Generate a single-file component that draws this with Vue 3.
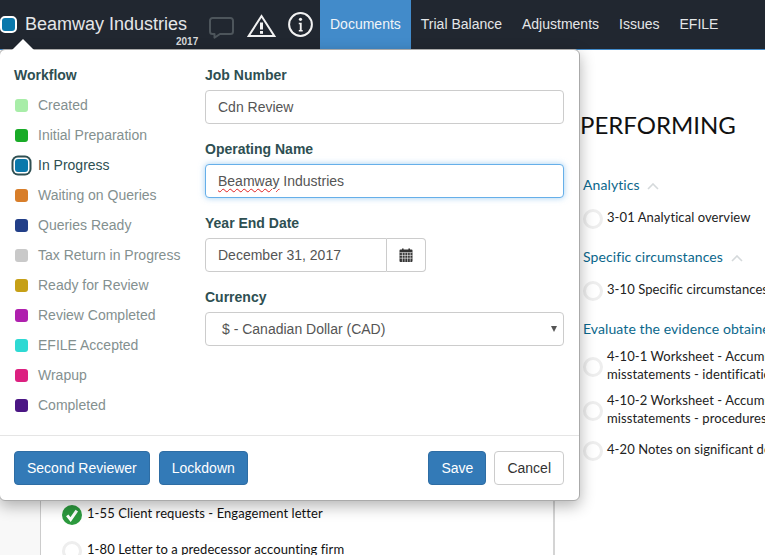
<template>
  <div class="page">
    <nav class="topbar">
      <div class="brand">
        <span class="brand-swatch"></span>
        <span class="brand-name">Beamway Industries</span>
        <span class="brand-year">2017</span>
      </div>
      <div class="nav-icons">
        <svg class="ico-comment" width="25" height="22" viewBox="0 0 25 22" fill="none">
          <path d="M3.5 1h18A2.5 2.5 0 0 1 24 3.500v11a2.500 2.500 0 0 1-2.500 2.500H11L5.500 20.800V17h-2A2.500 2.500 0 0 1 1 14.500v-11A2.500 2.500 0 0 1 3.500 1z" stroke="#4d555b" stroke-width="2" stroke-linejoin="round" />
        </svg>
        <svg class="ico-warn" width="29" height="23" viewBox="0 0 29 23" fill="none">
          <path d="M14.500 2 27.300 22H1.700z" stroke="#f2f2f2" stroke-width="2" stroke-linejoin="miter" />
          <rect x="13" y="8.500" width="3" height="7" fill="#f2f2f2" />
          <rect x="13" y="17" width="3" height="2.800" fill="#f2f2f2" />
        </svg>
        <svg class="ico-info" width="25" height="25" viewBox="0 0 25 25" fill="none">
          <circle cx="12.500" cy="12.500" r="11.400" stroke="#f2f2f2" stroke-width="2" />
          <circle cx="12.500" cy="7.300" r="1.600" fill="#f2f2f2" />
          <path d="M10.800 10.800h2.900v7.200h1v1.400h-3.900V18h1v-5.800h-1z" fill="#f2f2f2" />
        </svg>
      </div>
      <ul class="tabs">
        <li v-for="tab in tabs" :key="tab" :class="{ active: tab === 'Documents' }">{{ tab }}</li>
      </ul>
    </nav>

    <main class="content">
      <section class="left-col">
        <div class="doc-card">
          <div class="item">
            <svg class="check" width="20" height="20" viewBox="0 0 20 20">
              <circle cx="10" cy="10" r="10" fill="#2c9a3e" />
              <path d="M5.200 10.400 8.600 14.600 14.800 5.600" fill="none" stroke="#fff" stroke-width="3" />
            </svg>
            <span>1-55 Client requests - Engagement letter</span>
          </div>
          <div class="item">
            <span class="circle"></span>
            <span>1-80 Letter to a predecessor accounting firm</span>
          </div>
        </div>
      </section>
      <section class="right-col">
        <h1 class="phase">PERFORMING</h1>
        <div v-for="group in groups" :key="group.title" class="group">
          <h3 class="group-title">
            {{ group.title }}
            <svg v-if="group.chevron" class="chevron" width="12" height="7" viewBox="0 0 12 7" fill="none">
              <path d="M1 6l5-5 5 5" stroke="#d5d9db" stroke-width="1.600" />
            </svg>
          </h3>
          <div v-for="item in group.items" :key="item" class="item">
            <span class="circle"></span>
            <span class="item-text">{{ item }}</span>
          </div>
        </div>
      </section>
    </main>

    <div class="popover">
      <div class="arrow"></div>
      <div class="pop-body">
        <div class="workflow">
          <h4 class="wf-title">Workflow</h4>
          <div
            v-for="step in steps"
            :key="step.name"
            class="wf-step"
            :class="{ current: step.name === 'In Progress' }"
          >
            <span class="wf-swatch" :style="{ background: step.color }"></span>
            <span>{{ step.name }}</span>
          </div>
        </div>
        <form class="fields" @submit.prevent>
          <div class="field">
            <label>Job Number</label>
            <input class="control" type="text" value="Cdn Review" />
          </div>
          <div class="field">
            <label>Operating Name</label>
            <div class="control focused"><span class="misspelt">Beamway</span> Industries</div>
          </div>
          <div class="field">
            <label>Year End Date</label>
            <div class="date-group">
              <input class="control date-input" type="text" value="December 31, 2017" />
              <span class="date-btn">
                <svg width="14" height="14" viewBox="0 0 14 14">
                  <path fill="#333" d="M1.500 1.500H3V0.400h1.600v1.100h4.800V0.400H11v1.100h1.500A1 1 0 0 1 13.500 2.500v10.400a1 1 0 0 1-1 1h-11a1 1 0 0 1-1-1V2.500a1 1 0 0 1 1-1z" />
                  <path stroke="#fff" stroke-width="0.600" d="M0.500 4.600h13M0.500 7.400h13M0.500 10.200h13M3.400 4.600v9.300M6 4.600v9.300M8.600 4.600v9.300M11.200 4.600v9.300" />
                </svg>
              </span>
            </div>
          </div>
          <div class="field">
            <label>Currency</label>
            <div class="control select">
              <span>$ - Canadian Dollar (CAD)</span>
              <span class="caret"></span>
            </div>
          </div>
        </form>
      </div>
      <div class="pop-footer">
        <button class="btn primary">Second Reviewer</button>
        <button class="btn primary lockdown">Lockdown</button>
        <span class="spacer"></span>
        <button class="btn primary">Save</button>
        <button class="btn plain">Cancel</button>
      </div>
    </div>
  </div>
</template>

<script setup>
const tabs = ['Documents', 'Trial Balance', 'Adjustments', 'Issues', 'EFILE']

const steps = [
  { name: 'Created', color: '#a8eda8' },
  { name: 'Initial Preparation', color: '#19ab27' },
  { name: 'In Progress', color: '#0a78ab' },
  { name: 'Waiting on Queries', color: '#d87e2a' },
  { name: 'Queries Ready', color: '#223f88' },
  { name: 'Tax Return in Progress', color: '#c9c9c9' },
  { name: 'Ready for Review', color: '#c6a017' },
  { name: 'Review Completed', color: '#af20ae' },
  { name: 'EFILE Accepted', color: '#2ed9d3' },
  { name: 'Wrapup', color: '#dc2080' },
  { name: 'Completed', color: '#4b1684' },
]

const groups = [
  { title: 'Analytics', chevron: true, items: ['3-01 Analytical overview'] },
  { title: 'Specific circumstances', chevron: true, items: ['3-10 Specific circumstances'] },
  {
    title: 'Evaluate the evidence obtained',
    chevron: false,
    items: [
      '4-10-1 Worksheet - Accumulated\nmisstatements - identification',
      '4-10-2 Worksheet - Accumulated\nmisstatements - procedures',
      '4-20 Notes on significant decisions',
    ],
  },
]
</script>

<style>
html, body { margin: 0; overflow: hidden; background: #fff; }
</style>

<style scoped>
.page {
  position: relative;
  width: 765px;
  height: 555px;
  overflow: hidden;
  font-family: "Liberation Sans", Arial, sans-serif;
  font-size: 14px;
}

.topbar {
  display: flex;
  height: 49px;
  background: #212730;
  border-bottom: 1px solid #428bca;
}

.brand {
  position: relative;
  flex: none;
  display: flex;
  align-items: center;
  width: 209px;
  height: 48px;
}
.brand-swatch {
  flex: none;
  width: 13px;
  height: 13px;
  background: #0a78ab;
  border: 2px solid #fff;
  border-radius: 5px;
}
.brand-name { margin-left: 8px; font-size: 18px; color: #e4e6e8; white-space: nowrap; }
.brand-year {
  position: absolute;
  left: 176px;
  top: 35px;
  font-size: 10px;
  font-weight: 700;
  line-height: 13px;
  color: #d8dadc;
}

.nav-icons { flex: none; display: flex; align-items: flex-start; width: 111px; }
.ico-comment { margin-top: 17px; }
.ico-warn { margin: 14px 0 0 13px; }
.ico-info { margin: 12px 0 0 12px; }

.tabs { display: flex; margin: 0; padding: 0; list-style: none; }
.tabs li {
  padding: 0 10px;
  line-height: 49px;
  color: #e4e6e8;
  white-space: nowrap;
}
.tabs li.active { background: #428bca; color: #f0f4f8; }

.content { display: flex; height: 505px; }

.left-col {
  flex: none;
  width: 580px;
  box-sizing: border-box;
  padding: 20px 25px 0 0;
}
.doc-card {
  height: 600px;
  padding: 429px 0 0 62px;
  box-sizing: border-box;
  background: linear-gradient(to right, #f8f8f8 40px, #ccc 40px, #ccc 41px, #fff 41px);
  border-right: 2px solid #d4d4d4;
}

.item {
  display: flex;
  align-items: center;
  gap: 4px;
  min-height: 28px;
  margin-bottom: 8px;
  font-family: Lato, sans-serif;
  font-size: 13px;
  line-height: 18px;
  letter-spacing: 0.08px;
  color: #222;
  white-space: pre-line;
}
.doc-card .item { gap: 5px; color: #111; white-space: nowrap; }

.circle {
  flex: none;
  width: 14px;
  height: 14px;
  margin-top: 4px;
  border: 3px solid #eee;
  border-radius: 50%;
}
.check { flex: none; margin-top: 4px; }

.right-col { flex: none; width: 300px; font-family: Lato, sans-serif; white-space: nowrap; }
.phase {
  margin: 60px 0 35px;
  font-size: 24px;
  font-weight: 400;
  line-height: 30px;
  color: #111;
}
.group { margin-left: 3px; padding-bottom: 8px; }
.group-title {
  margin: 0 0 8px;
  font-size: 14px;
  font-weight: 400;
  line-height: 20px;
  letter-spacing: 0.09px;
  color: #0b678c;
}
.chevron { margin-left: 4px; }

.popover {
  position: absolute;
  left: -1px;
  top: 49px;
  width: 581px;
  height: 452px;
  box-sizing: border-box;
  background: #fff;
  border: 1px solid #aaa;
  border-radius: 6px;
  box-shadow: 0 5px 15px rgba(0, 0, 0, 0.3);
}
.arrow {
  position: absolute;
  left: 12px;
  top: -11px;
  width: 0;
  height: 0;
  border-left: 11px solid transparent;
  border-right: 11px solid transparent;
  border-bottom: 11px solid #fff;
}

.pop-body { display: flex; height: 385px; box-sizing: border-box; padding: 15px 15px 0 14px; }

.workflow { width: 191px; flex: none; }
.wf-title {
  margin: 0 0 5px;
  font-size: 14px;
  line-height: 20px;
  color: #2e4f52;
}
.wf-step {
  display: flex;
  align-items: center;
  gap: 10px;
  height: 30px;
  padding-left: 1px;
  color: #84908f;
  white-space: nowrap;
}
.wf-swatch {
  flex: none;
  width: 13px;
  height: 13px;
  border-radius: 3px;
}
.wf-step.current { color: #2e4f52; }
.wf-step.current .wf-swatch {
  box-shadow: 0 0 0 1.500px #fff, 0 0 0 3.500px #2e4f52;
}

.fields { flex: 1; }
.field { margin-bottom: 15px; }
.field label {
  display: block;
  margin-bottom: 5px;
  font-weight: 700;
  line-height: 20px;
  color: #2e4f52;
}
.control {
  display: block;
  box-sizing: border-box;
  width: 359px;
  height: 34px;
  padding: 6px 12px;
  background: #fff;
  border: 1px solid #ccc;
  border-radius: 4px;
  font: inherit;
  line-height: 20px;
  color: #555;
}
.focused {
  border-color: #66afe9;
  box-shadow: 0 0 6px rgba(102, 175, 233, 0.6);
}
.misspelt { text-decoration: underline wavy #e02020 1px; text-underline-offset: 2px; }

.date-group { display: flex; width: 221px; }
.date-input { width: 182px; border-radius: 4px 0 0 4px; }
.date-btn {
  display: flex;
  align-items: center;
  justify-content: center;
  box-sizing: border-box;
  width: 39px;
  height: 34px;
  border: 1px solid #ccc;
  border-left: 0;
  border-radius: 0 4px 4px 0;
}

.select {
  display: flex;
  align-items: center;
  justify-content: space-between;
  padding: 6px 6px 6px 16px;
}
.caret {
  width: 0;
  height: 0;
  border-left: 3px solid transparent;
  border-right: 3px solid transparent;
  border-top: 6px solid #555;
}

.pop-footer {
  display: flex;
  align-items: center;
  gap: 8px;
  height: 64px;
  padding: 0 15px 0 14px;
  border-top: 1px solid #e5e5e5;
}
.spacer { flex: 1; }
.btn {
  box-sizing: border-box;
  height: 34px;
  padding: 6px 12px;
  border: 1px solid;
  border-radius: 4px;
  font: inherit;
  line-height: 20px;
}
.lockdown { margin-left: 1px; }
.primary { background: #337ab7; border-color: #2e6da4; color: #fff; }
.plain { background: #fff; border-color: #ccc; color: #333; }
</style>
